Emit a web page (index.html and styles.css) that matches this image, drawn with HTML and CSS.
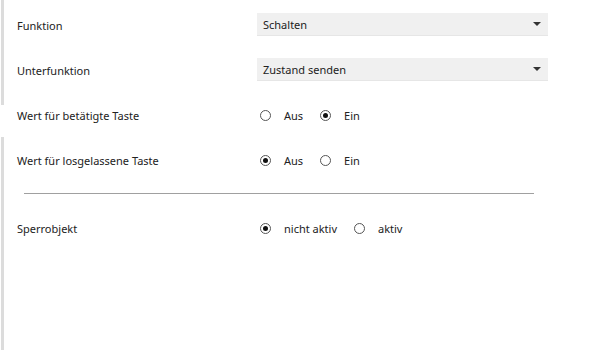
FILE: index.html
```html
<!DOCTYPE html>
<html lang="de">
<head>
    <meta charset="UTF-8">
    <title>Parameter</title>
    <link rel="stylesheet" href="styles.css">
</head>
<body>
    <div class="panel">
        <div class="row">
            <div class="label">Funktion</div>
            <div class="select">
                <span>Schalten</span>
                <span class="arrow"></span>
            </div>
        </div>
        <div class="row">
            <div class="label">Unterfunktion</div>
            <div class="select">
                <span>Zustand senden</span>
                <span class="arrow"></span>
            </div>
        </div>
        <div class="row open">
            <div class="label">Wert für betätigte Taste</div>
            <div class="radios">
                <span class="radio"></span><span class="opt">Aus</span>
                <span class="radio checked"></span><span class="opt">Ein</span>
            </div>
        </div>
        <div class="row">
            <div class="label">Wert für losgelassene Taste</div>
            <div class="radios">
                <span class="radio checked"></span><span class="opt">Aus</span>
                <span class="radio"></span><span class="opt">Ein</span>
            </div>
        </div>
        <hr class="sep">
        <div class="row">
            <div class="label">Sperrobjekt</div>
            <div class="radios">
                <span class="radio checked"></span><span class="opt">nicht aktiv</span>
                <span class="radio"></span><span class="opt">aktiv</span>
            </div>
        </div>
    </div>
</body>
</html>
```

FILE: styles.css
```css
body {
    margin: 0;
    background: #fff;
    font-family: "Noto Sans", "Open Sans", sans-serif;
    font-size: 11px;
    color: #222;
}
.panel {
    margin-left: 1px;
    border-left: 3px solid #dcdcdc;
    padding-top: 2px;
    min-height: calc(100vh - 2px);
}
.row {
    display: flex;
    align-items: center;
    min-height: 23px;
    padding: 11px 0;
}
.row.open {
    margin-left: -3px;
    border-left: 3px solid;
    border-image: linear-gradient(#dcdcdc 13px, #fff 13px) 1;
}
.label {
    width: 240px;
    padding-left: 13px;
    padding-top: 1px;
}
.select {
    width: 291px;
    height: 23px;
    background: #f0f0f0;
    border-bottom: 1px solid #e6e6e6;
    box-sizing: border-box;
    display: flex;
    align-items: center;
    justify-content: space-between;
    padding: 0 7px 0 6px;
}
.arrow {
    width: 0;
    height: 0;
    border-left: 4px solid transparent;
    border-right: 4px solid transparent;
    border-top: 4px solid #333;
}
.radios {
    display: flex;
    align-items: center;
    padding-left: 3px;
    padding-top: 1px;
}
.radio {
    width: 11px;
    height: 11px;
    border: 1px solid #555;
    border-radius: 50%;
    box-sizing: border-box;
    display: flex;
    align-items: center;
    justify-content: center;
}
.radio.checked::after {
    content: "";
    width: 5px;
    height: 5px;
    border-radius: 50%;
    background: #111;
}
.opt {
    margin: 0 17px 0 13px;
}
.sep {
    border: 0;
    border-top: 1px solid #a0a0a0;
    margin: 11px 0 11px 20px;
    width: 510px;
}
```
